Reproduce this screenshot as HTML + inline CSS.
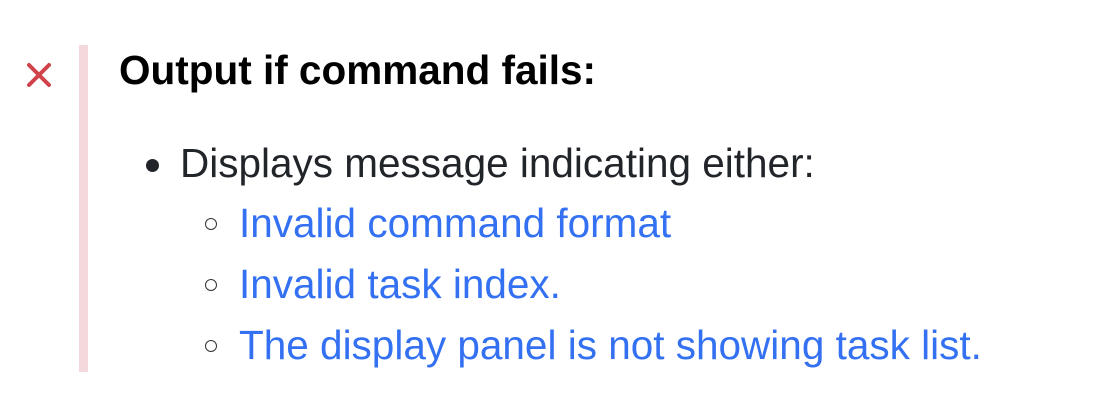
<!DOCTYPE html>
<html><head><style>
body{margin:0;width:1106px;height:406px;background:#fff;position:relative;overflow:hidden;font-family:"Liberation Sans",Arial,sans-serif}
.bar{position:absolute;left:79px;top:45px;width:9px;height:327px;background:#f3d9db}
.l{position:absolute;white-space:nowrap;line-height:1}
.h{left:119px;top:50px;font-size:40.5px;font-weight:bold;color:#000}
.b{left:180px;font-size:40.5px;color:#212529}
.a{left:239px;font-size:40.5px;color:#3371f2}
.dot{position:absolute;left:146px;top:159px;width:13px;height:13px;border-radius:50%;background:#212529}
.c{position:absolute;left:205px;width:10px;height:10px;border:1.5px solid #333;border-radius:50%}
</style></head><body>
<svg style="position:absolute;left:26px;top:62px" width="26" height="26" viewBox="0 0 26 26"><path d="M3 3L23 23M23 3L3 23" stroke="#d0434b" stroke-width="4" stroke-linecap="round"/></svg>
<div class="bar"></div>
<div class="l h">Output if command fails:</div>
<div class="dot"></div>
<div class="l b" style="top:143px">Displays message indicating either:</div>
<div class="c" style="top:218px"></div>
<div class="l a" style="top:203px">Invalid command format</div>
<div class="c" style="top:279px"></div>
<div class="l a" style="top:264px">Invalid task index.</div>
<div class="c" style="top:340px"></div>
<div class="l a" style="top:325px">The display panel is not showing task list.</div>
</body></html>
